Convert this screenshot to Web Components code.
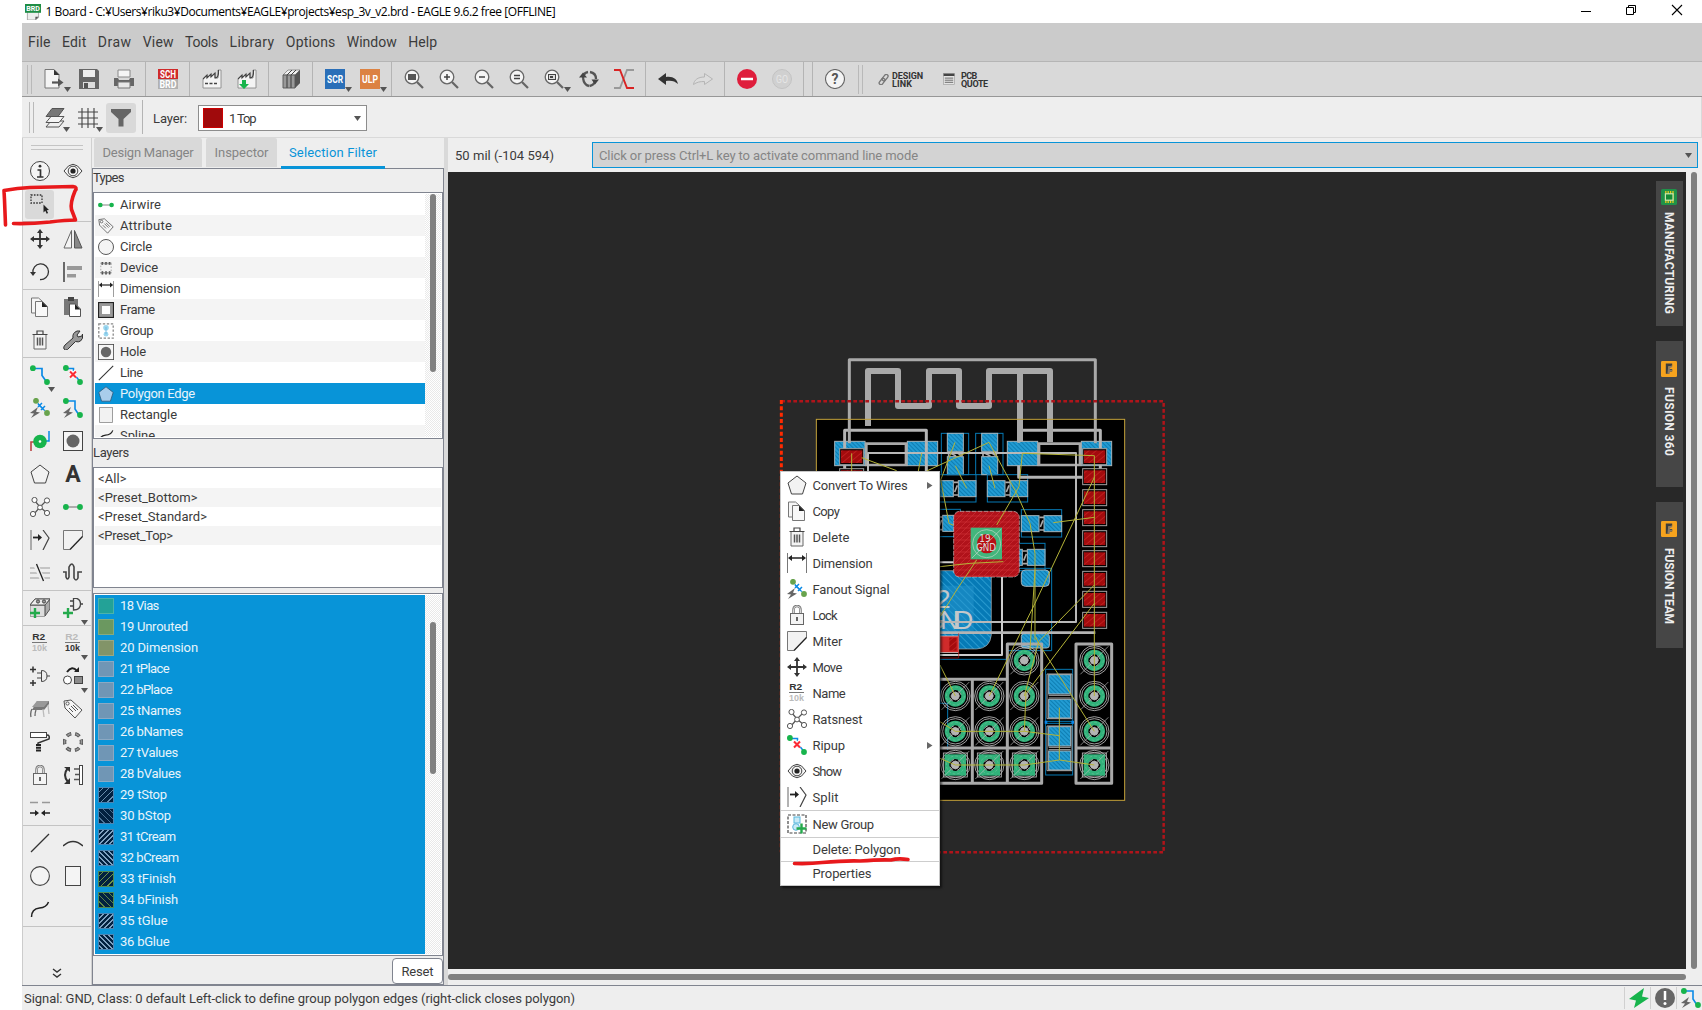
<!DOCTYPE html>
<html lang="en"><head><meta charset="utf-8"><title>Board editor</title>
<style>html,body{margin:0;height:100%;background:#fff;overflow:hidden}</style></head>
<body><eagle-app></eagle-app>
<script>
const G='#17b44c',B='#0a8ae6';
const gear='<circle cx="8" cy="8" r="6.8" fill="#f5f5f5" stroke="#666" stroke-width="1.3"/><path d="M13 13l6 6" stroke="#666" stroke-width="2.2"/>';
const node=(x,y,c=G)=>`<circle cx="${x}" cy="${y}" r="2.9" fill="${c}"/>`;
const bolt='<path d="M8 9L0 15l4 .6L1 20l9-5.6-4-.6z" fill="#666"/>';
const plus=(x,y,c='#24aa4c',s=5,w=2.4)=>`<path d="M${x-s} ${y}h${2*s}M${x} ${y-s}v${2*s}" stroke="${c}" stroke-width="${w}" fill="none"/>`;
const books='<path d="M2 6L7 1h12v13l-5 5H2z" fill="#888"/><path d="M2 6L7 1h12l-5 5z" fill="#f0f0f0" stroke="#777" stroke-width=".7"/><path d="M2 6v13h4V6zM6 6v13h4V6zM10 6v13h4V6z" fill="#999" stroke="#555" stroke-width=".9"/><path d="M6 6l5-5M10 6l5-5" stroke="#444"/><path d="M14 6l5-5v13l-5 5z" fill="#555"/>';
const fac='<path d="M1 19V10l4-4v3l4-4v3l4-4v5l3 0V1h3V19z" fill="#f4f4f4" stroke="#8a8a8a" stroke-width=".9"/><path d="M1 10l4-4v3l4-4v3l4-4v5q4 0 3.500-8" fill="none" stroke="#444" stroke-width="1.100"/>';
const tag='<path d="M1 2l7-1 11 10-7 8L2 9z" fill="#f6f6f6" stroke="#555"/><circle cx="4.500" cy="4.500" r="1.600" fill="#fff" stroke="#555"/><path d="M6 9l4 4M8 7l5 5M10 6l5 5" stroke="#555" stroke-width="1"/>';
const r2=(a,b)=>`<g font-family="Liberation Sans,sans-serif" font-weight="700" font-size="8.800"><text x="8.700" y="7.300" text-anchor="middle" textLength="13" lengthAdjust="spacingAndGlyphs" fill="${a}">R2</text><text x="9.500" y="17.600" text-anchor="middle" textLength="15" lengthAdjust="spacingAndGlyphs" fill="${b}">10k</text></g><path d="M2 9.500h15" stroke="#777"/>`;
const I={
brd:'<path d="M3 8h14v9l-4 3H3z" fill="#eee" stroke="#999"/><path d="M13 20v-4h4z" fill="#555"/><rect x="0" y="0" width="20" height="11" fill="#1f8d45"/><text x="10" y="8.800" font-size="8.500" font-weight="700" fill="#fff" text-anchor="middle" textLength="17" lengthAdjust="spacingAndGlyphs" font-family="Roboto,sans-serif">BRD</text>',
newf:'<path d="M1 .5h9l5 5V19H1z" fill="#f4f4f4" stroke="#777"/><path d="M10 .5v5.500h5.500z" fill="#333"/><path d="M8 13.500h6" stroke="#555" stroke-width="2.200"/><path d="M14 9.500l5.500 4-5.500 4z" fill="#555"/>',
save:'<path d="M0 0h18l2 2v18H0z" fill="#666"/><path d="M4 1h12v7H4z" fill="#eee"/><path d="M4 13h12v6H4z" fill="#ddd"/><rect x="5" y="14" width="4" height="5" fill="#555"/>',
print:'<path d="M4 1h12v7H4z" fill="#f4f4f4" stroke="#888"/><path d="M0 9h4l1 2h10l1-2h4v8H0z" fill="#666"/><path d="M4 13h12v6H4z" fill="#e8e8e8" stroke="#777"/>',
sch:'<rect width="20" height="10" fill="#cf2a2a"/><rect y="10" width="20" height="10" fill="#b1b1b1"/><g font-family="Roboto,sans-serif" font-weight="700" font-size="10" fill="#fff" text-anchor="middle"><text x="10" y="8.700" textLength="16" lengthAdjust="spacingAndGlyphs">SCH</text><text x="10" y="18.700" textLength="17" lengthAdjust="spacingAndGlyphs">BRD</text></g>',
fac:fac+'<path d="M3 14.500h3m1.500 0h3m1.500 0h3" stroke="#444" stroke-width="1.500"/>',
fac2:fac+`<path d="M5 11h4v4h3l-5 5-5-5h3z" fill="${G}"/>`,books,
scr:'<rect width="20" height="20" fill="#2a6fb8"/><text x="10" y="13.800" font-size="10" font-weight="700" fill="#fff" text-anchor="middle" textLength="16" lengthAdjust="spacingAndGlyphs" font-family="Roboto,sans-serif">SCR</text>',
ulp:'<rect width="20" height="20" fill="#dc8242"/><text x="10" y="13.800" font-size="10" font-weight="700" fill="#fff" text-anchor="middle" textLength="16" lengthAdjust="spacingAndGlyphs" font-family="Roboto,sans-serif">ULP</text>',
zfit:gear+'<rect x="4" y="5" width="8" height="6" fill="#555"/>',zin:gear+plus(8,8,'#444',3,1.5),zout:gear+'<path d="M5 8h6" stroke="#444" stroke-width="1.500"/>',zeq:gear+'<path d="M5 6.500h6M5 9.500h6" stroke="#444" stroke-width="1.500"/>',zsel:gear+'<rect x="4.500" y="5.500" width="7" height="5" fill="#ddd" stroke="#444"/><rect x="6" y="7" width="3" height="2" fill="#444"/>',
refresh:'<path d="M9 3Q4 4 4 9M4 9q1 7 6 8M11 3q6 1 6 7M16.500 11q-1 5-6 6" fill="none" stroke="#555" stroke-width="2.300"/><path d="M9 2Q3 4 3.500 9.500L9 16q-3-6 0-14z" fill="none"/><path d="M0 8.500h8L4 3.500zM12.500 10.500h7.500l-4 5z" fill="#444"/>',
xline:'<path d="M0 19h6l7-18h7" fill="none" stroke="#999" stroke-width="1.800"/><path d="M0 1h6l7 18h7" fill="none" stroke="#d92323" stroke-width="1.900"/>',
undo:'<path d="M0 10l8-6v4c7-1 11 2 12 7-3-3-7-4-12-3v4z" fill="#333"/>',redo:'<path d="M19.500 10l-8-5.500V8C5 8 1 11 .5 15.500 4 13 7 12.500 11.500 12.500v3z" fill="#dcdcdc" stroke="#b5b5b5"/>',
stop:'<circle cx="10" cy="10" r="10" fill="#df1e3c"/><path d="M4 10h12" stroke="#fff" stroke-width="2.500"/>',
go:'<circle cx="10" cy="10" r="9.500" fill="#d0d0d0" stroke="#c3c3c3"/><text x="10" y="14" font-size="11" fill="#e6e6e6" text-anchor="middle" textLength="12" lengthAdjust="spacingAndGlyphs" font-family="Roboto,sans-serif">GO</text>',
help:'<circle cx="10" cy="10" r="9.500" fill="#f4f4f4" stroke="#666" stroke-width="1.100"/><text x="10" y="15" font-size="14" font-weight="700" fill="#555" text-anchor="middle" font-family="Roboto,sans-serif">?</text>',
link:'<g transform="rotate(-52 10 10)" fill="none" stroke="#777" stroke-width="2.400"><rect x="-1" y="7" width="13" height="6.500" rx="3.200"/><rect x="8" y="7" width="13" height="6.500" rx="3.200"/></g>',
quote:'<rect x="1" y="1" width="18" height="18" fill="#e4e4e4" stroke="#999"/><path d="M1 3h18" stroke="#444" stroke-width="4"/><path d="M3 8.500h14M3 12h14M3 15.500h14" stroke="#555" stroke-width="1.400"/>',
layers:'<g stroke="#555" stroke-width="1"><path d="M1 19l5-6h13l-5 6z" fill="#eee"/><path d="M1 14.500L6 8.500h13l-5 6z" fill="#f4f4f4"/><path d="M1 8.500l6-8h12l-6 8z" fill="#777"/></g>',
grid:'<path d="M4 0v20M10 0v20M16 0v20M0 4h20M0 10h20M0 16h20" stroke="#444" stroke-width="1.100"/>',
filter:'<path d="M0 1h20v3l-7.500 7v7.500h-5V11L0 4z" fill="#666"/>',
info:'<circle cx="10" cy="10" r="9.500" fill="#f4f4f4" stroke="#444"/><circle cx="10" cy="5.200" r="1.400" fill="#333"/><path d="M7.500 9h3v7M7 16h6.500" fill="none" stroke="#333" stroke-width="1.700"/>',
eye:'<path d="M1 10Q10-3.500 19 10 10 23.500 1 10z" fill="#f4f4f4" stroke="#444"/><circle cx="10" cy="10" r="4.800" fill="none" stroke="#444"/><circle cx="10" cy="10" r="2.600" fill="#222"/>',
select:'<rect x="1" y="1" width="11" height="8" fill="none" stroke="#333" stroke-width="1.300" stroke-dasharray="1.600 1.300"/><path d="M13.500 10.500v8l1.800-1.700 1.400 3 1.400-.7-1.400-2.900 2.300-.2z" fill="#222"/>',
move:'<path d="M10 2v16M2 10h16" stroke="#333" stroke-width="1.800"/><path d="M10 0L7 4h6zM10 20l-3-4h6zM0 10l4-3v6zM20 10l-4-3v6z" fill="#333"/>',
mirror:'<path d="M8.500 1.500V19H1z" fill="#f4f4f4" stroke="#666"/><path d="M11.500 1.500V19H19z" fill="#888" stroke="#555"/>',
rotate:'<path d="M3 11a7.800 7.800 0 1 1 7 6.500" fill="none" stroke="#333" stroke-width="1.300"/><path d="M0 10h6l-3 4z" fill="#333"/>',
align:'<path d="M1 0v20" stroke="#222" stroke-width="1.300"/><rect x="4" y="4" width="15" height="4" fill="#999"/><rect x="4" y="12" width="9" height="3.500" fill="#999"/>',
copy:'<path d="M1.500 1h7L12 4v12H1.500z" fill="#f6f6f6" stroke="#777"/><path d="M5.500 4.500h7l5 5v10h-12z" fill="#f8f8f8" stroke="#777"/><path d="M12 4.500l5.500 5.500H12z" fill="#222"/>',
paste:'<path d="M1 2h14v16H1z" fill="#777"/><rect x="5" width="6" height="4" fill="#444"/><path d="M6.500 7h6l5 5v7.500h-11z" fill="#fff" stroke="#555"/><path d="M12 7l5.500 5.500H12z" fill="#222"/>',
trash:'<path d="M4 4.500h12V19H4z" fill="#f4f4f4" stroke="#666"/><path d="M2.500 4.500h15M7 4V1h6v3" fill="none" stroke="#444" stroke-width="1.200"/><path d="M7.500 7.500v8M10 7.500v8M12.500 7.500v8" stroke="#555" stroke-width="1.500"/>',
wrench:'<path d="M1 19q-1-2 1-4l8-7q-1-5 4-7l3 0-3 4 1 2 4-1 .5-2q1 5-2 7-2 1.500-5 .5l-8 8q-2 1.500-3.500-.5z" fill="#999" stroke="#333"/>',
route:'<path d="M3 3.500h9v7l5 7" fill="none" stroke="#0a8ae6" stroke-width="1.700"/>'+node(2.900,3.200)+node(17,17),
ripup:'<path d="M3 3.500h7.500v5l6.500 8" fill="none" stroke="#0a8ae6" stroke-width="1.500"/>'+node(2.900,3)+node(17,17)+'<path d="M7 6l6 6.500M13 6l-6 6.500" stroke="#fff" stroke-width="4"/><path d="M7 6.500l6 6M13 6.500l-6 6" stroke="#fb2b35" stroke-width="2.100"/>',
fanout:'<path d="M5 2l12 13" stroke="#0a8ae6"/><path d="M8 9l4-4M11 12l4-4M8 6l6 6" stroke="#0a8ae6" stroke-width="1.500"/>'+node(6,2.800,'#68a34d')+node(17,15,'#68a34d')+bolt,
autor:'<path d="M3 3h9v8l4 6" fill="none" stroke="#0a8ae6" stroke-width="1.600"/>'+node(2.900,3)+node(17,17)+bolt,
via:`<path d="M1 20v-9h4" fill="none" stroke="#b44" stroke-width="1.600"/><path d="M13 10h6V0" fill="none" stroke="${B}" stroke-width="1.500"/><circle cx="10" cy="10.500" r="6.800" fill="${G}"/><circle cx="10" cy="10.500" r="1.300" fill="#fff"/>`,
hole:'<rect x=".5" y=".5" width="19" height="19" fill="#f6f6f6" stroke="#444"/><circle cx="10" cy="10" r="6.500" fill="#666"/>',
pent:'<path d="M10 1l9 7-3.500 11h-11L1 8z" fill="#f2f2f2" stroke="#444"/>',pentb:'<path d="M10 1l9 7-3.500 11h-11L1 8z" fill="#a9cdeb" stroke="#345879"/>',
txt:'<text x="10" y="18" font-size="23" font-weight="700" fill="#333" text-anchor="middle" font-family="Roboto,sans-serif">A</text>',
rats:'<path d="M5 4l5 6 6-6M10 10l-6 7M10 10l7 6" fill="none" stroke="#555" stroke-width="1.200"/><g fill="#fff" stroke="#555"><circle cx="4.500" cy="3" r="2.600"/><circle cx="17" cy="3.500" r="2.600"/><circle cx="10" cy="10.500" r="2.400"/><circle cx="3" cy="17" r="2.600"/><circle cx="17" cy="16" r="2.600"/></g>',
air:'<path d="M3 10h14" stroke="#888" stroke-width="1.300"/>'+node(2.900,10)+node(17,10),
split:'<path d="M1 0v20" stroke="#666"/><path d="M3 7.500h6" stroke="#222" stroke-width="1.800"/><path d="M8 4l4 3.500L8 11z" fill="#222"/><path d="M13 0l6 8-6 12" fill="none" stroke="#444" stroke-width="1.200"/>',
miter:'<path d="M.5.500h19V7L7 19.500H.5z" fill="#f2f2f2"/><path d="M19.500 7V.5H.5v19H7" fill="none" stroke="#777"/><path d="M19.500 6.500L7 19.500" stroke="#222" stroke-width="1.300"/>',
cut:'<path d="M0 5h20M0 10h20M0 15h20" stroke="#999" stroke-width="1.200"/><path d="M5 0l9 20" stroke="#eee" stroke-width="5"/><path d="M6.500 1l7 17" stroke="#222" stroke-width="1.300"/>',
meander:'<path d="M0 9h3v5q1.500 4 3 0V4q3-6 5 0v11q2 4 4 0V9h4" fill="none" stroke="#444" stroke-width="1.600"/>',
addp:'<path d="M0 7l5-6h15v10l-5 7H0z" fill="#aaa" stroke="#555"/><path d="M.5 7H15v11H.5z" fill="#ddd"/><path d="M0 7h15v11M15 7l5-6" fill="none" stroke="#444"/><path d="M0 7l5-6h15l-5 6z" fill="#eee" stroke="#555"/><circle cx="8" cy="3.500" r="1.600" fill="#999" stroke="#444"/><circle cx="14" cy="3.500" r="1.600" fill="#999" stroke="#444"/>'+plus(5,15),
addg:'<path d="M10.500 0q7 0 7 6t-7 6zM7 3h4M7 8h4M17 6h3" fill="none" stroke="#444" stroke-width="1.300"/>'+plus(5,15),
name:r2('#333','#bbb'),value:r2('#bbb','#333'),
swapg:plus(3,3.500,'#333',3,1.500)+plus(3,17,'#333',3,1.500)+'<path d="M11.500 4.500q5.500 0 5.500 5.500t-5.500 5.500zM7 7h4M7 12h4M17 10h3" fill="none" stroke="#444" stroke-width="1"/>',
repl:'<circle cx="4.500" cy="14" r="4" fill="#fff" stroke="#444"/><rect x="11.500" y="10.500" width="8" height="7" fill="#8c8c8c" stroke="#444"/><path d="M4 6q5-7 10-1" fill="none" stroke="#222" stroke-width="2"/><path d="M11 6h5V1z" fill="#222"/>',
chip:'<path d="M7 2h12v3l-5 6H2z" fill="#777"/><path d="M7 2h12l-5 6H2z" fill="#999"/><path d="M2 10q-2 3-1 8M6 11q-1 2-1 6" fill="none" stroke="#666" stroke-width="1.300"/><path d="M13 10l1 8M18 6l1 9" stroke="#bbb" stroke-width="1.300"/>',tag,
roller:'<rect x=".5" y=".5" width="16" height="5" fill="#fff" stroke="#444"/><path d="M17 3q3 0 2 4L8 11v3" fill="none" stroke="#333" stroke-width="1.500"/><path d="M8.500 12v8" stroke="#222" stroke-width="5" stroke-dasharray="2 .7"/>',
ring:'<circle cx="10" cy="10" r="8.500" fill="none" stroke="#555" stroke-width="3.500" stroke-dasharray="5 3.900" transform="rotate(-17 10 10)"/><circle cx="10" cy="10" r="8.500" fill="none" stroke="#999" stroke-width="1.600" stroke-dasharray="3.500 5.400" stroke-dashoffset="-.7" transform="rotate(-17 10 10)"/>',
lock:'<rect x="3.500" y="8.500" width="13" height="11" fill="#f4f4f4" stroke="#666"/><path d="M6.500 8V5q0-4 3.500-4t3.500 4v3" fill="none" stroke="#777" stroke-width="2.500"/><path d="M6.500 8V5q0-4 3.500-4t3.500 4v3" fill="none" stroke="#fff" stroke-width=".7"/><path d="M10 12v4" stroke="#333" stroke-width="1.500"/>',
swap:'<path d="M5 3Q-1 10 5 17" fill="none" stroke="#333" stroke-width="2"/><path d="M1 2h6v5zM1 19h6v-6z" fill="#333"/><rect x="16.500" y=".5" width="3" height="19" fill="#fff" stroke="#444"/><path d="M11 4h5M12 9.500h4M11 14.500h5" stroke="#555" stroke-width="1.600"/>',
join:'<path d="M0 4.500h8M12 4.500h8" stroke="#999" stroke-width="1.500"/><path d="M0 15h6M14 15h6" stroke="#222" stroke-width="1.500"/><path d="M9 15l-4-3v6zM11 15l4-3v6z" fill="#222"/>',
line:'<path d="M1 19L19 1" stroke="#333" stroke-width="1.300"/>',arc:'<path d="M0 13q10-9 20 0" fill="none" stroke="#333" stroke-width="1.500"/>',
circle:'<circle cx="10" cy="10" r="9.400" fill="#f4f4f4" stroke="#444" stroke-width="1.100"/>',rect:'<rect x="2.500" y=".5" width="15" height="19" fill="#f4f4f4" stroke="#444"/>',spline:'<path d="M1.500 18q0-8 8-9 7-.5 9-6" fill="none" stroke="#222" stroke-width="1.500"/>',
dev:'<rect x="3.500" y="5" width="13" height="11" fill="#f4f4f4" stroke="#999" stroke-dasharray="2 2"/><path d="M5.500 2.500v3.500M10 2.500v3.500M14.500 2.500v3.500M5.500 14v4M10 14v4M14.500 14v4" stroke="#444" stroke-width="2"/><path d="M3 4h14M3 16h14" stroke="#777"/>',
dim:'<path d="M.5 0v20M19.500 0v20" stroke="#777"/><path d="M3 5h14" stroke="#222" stroke-width="1.500"/><path d="M1 5l4-3v6zM19 5l-4-3v6z" fill="#222"/>',
frame:'<rect x=".7" y=".7" width="18.600" height="18.600" fill="#999" stroke="#222" stroke-width="1.400"/><rect x="5" y="5" width="10" height="10" fill="#fff"/>',
group:'<rect x="1" y="1" width="18" height="18" fill="#fff" stroke="#888" stroke-width="1.600" stroke-dasharray="3 2"/><circle cx="10" cy="6" r="3.500" fill="#9bd7ef"/><circle cx="10" cy="14" r="3" fill="#9bd7ef"/><path d="M10 5v9" stroke="#67aedb"/>',
ngroup:'<rect x="1" y="1" width="18" height="18" fill="#fff" stroke="#444" stroke-width="1.200" stroke-dasharray="3 1.500"/><rect x="7" y="3" width="6" height="6" fill="#c9eaf7" stroke="#59b7dd"/><circle cx="9" cy="13" r="3.300" fill="#c9eaf7" stroke="#59b7dd"/>'+plus(14.500,14.500),
rect2:'<rect x="2" y=".7" width="16" height="18.600" fill="#f2f2f2" stroke="#888"/>',
bolt:`<path d="M15 0L0 11l7 1.500L5 20l15-10-7-1.500z" fill="${G}"/>`,warn:'<circle cx="10" cy="10" r="10" fill="#666"/><path d="M10 3v9" stroke="#fff" stroke-width="2.500"/><circle cx="10" cy="15.500" r="1.500" fill="#fff"/>',
mfg:'<rect width="20" height="20" rx="2" fill="#1f9149"/><path d="M6 2.500v15M9 2.500v15M12 2.500v15M15 2.500v15" stroke="#e8c91c" stroke-width="1.600"/><rect x="5.500" y="6" width="9.500" height="8" fill="#168a35" stroke="#cde4b0" stroke-width="1.500"/>',
fus:'<rect width="20" height="20" rx="1.500" fill="#f6a31e"/><path d="M6 3h8v3l-5 1v3l5 0v3l-4 0v3l-4 0z" fill="#3b3d3e"/><path d="M9 7l5-1.500v2l-3 1.500v2h3v1.500l-3 .5v3l-3 0z" fill="#8a7a66"/>',
chev:'<path d="M6 4l4 3 4-3M6 9l4 3 4-3" fill="none" stroke="#333" stroke-width="1.400"/>'
};
const box='*{box-sizing:border-box}';
function def(n,html){const t=document.createElement('template');
 return [n,class extends HTMLElement{connectedCallback(){if(this.shadowRoot)return;const r=this.attachShadow({mode:'open'});t.innerHTML=typeof html==='function'?html(this):html;r.append(t.content.cloneNode(true));}}]}
const T=(s,w)=>`<fit-text w="${w}">${s}</fit-text>`;
const A=(e,n,d='')=>e.getAttribute(n)??d;
const tri='<svg width="7" height="5" viewBox="0 0 7 5"><path d="M0 0h7L3.500 5z" fill="#555"/></svg>';
const types=[['air','Airwire',41],['tag','Attribute',52],['circle','Circle',32],['dev','Device',38],['dim','Dimension',60.5],['frame','Frame',35],['group','Group',33.5],['hole','Hole',26],['line','Line',23],['pentb','Polygon Edge',75],['rect2','Rectangle',57],['spline','Spline',35]];
const lay=[['18 Vias',39,'#23a297'],['19 Unrouted',68,'#6b9860'],['20 Dimension',78,'#829468'],['21 tPlace',49.5],['22 bPlace',52.5],['25 tNames',61],['26 bNames',63],['27 tValues',58],['28 bValues',61],['29 tStop',47,0,'a'],['30 bStop',51,0,'b'],['31 tCream',56,0,'c'],['32 bCream',59,0,'d'],['33 tFinish',56,0,'e'],['34 bFinish',58,0,'f'],['35 tGlue',47.5,0,'c'],['36 bGlue',49.5,0,'d']];
function swatch(c,h){ if(!h)return `background:${c||'#7096b5'};border:1px solid #ffffff30`;
 const col={a:'#6b8fae',b:'#4d7293',c:'#7fa0bf',d:'#7fa0bf',e:'#6f9448',f:'#5d8448'}[h],dir='ace'.includes(h)?'-45deg':'45deg',w='cd'.includes(h)?1.7:.8,p='cd'.includes(h)?3.5:4.3;
 return `border:1px solid ${'ef'.includes(h)?'#4f8a55':'#4b85b4'};background:repeating-linear-gradient(${dir},#022140 0 ${p-w}px,${col} ${p-w}px ${p}px)`}
const tools=[['info','eye'],['select*',''],0,['move','mirror'],['rotate','align'],0,['copy','paste'],['trash','wrench'],0,['route^','ripup'],['fanout','autor'],['via','hole'],['pent','txt'],['rats','air'],['split','miter'],['cut','meander'],0,['addp','addg^'],0,['name','value^'],['swapg','repl^'],['chip','tag'],['roller','ring'],['lock','swap'],['join',''],0,['line','arc'],['circle','rect'],['spline',''],0];
const cm=[['pent','Convert To Wires',95,1],['copy','Copy',27],['trash','Delete',37],['dim','Dimension',60],['fanout','Fanout Signal',77],['lock','Lock',24.5],['miter','Miter',30],['move','Move',29.5],['name','Name',33],['rats','Ratsnest',50],['ripup','Ripup',32.5,1],['eye','Show',29],['split','Split',26]];
function pcb(){
 const rc=(x,y,X,Y,a)=>`<rect x="${x}" y="${y}" width="${X-x}" height="${Y-y}" ${a}/>`;
 const bp=(x,y,X,Y,r=0)=>rc(x,y,X,Y,`rx="${r}" fill="url(#hb)" stroke="#a5b4bb" stroke-width="3"`);
 const ol=(x,y,X,Y)=>rc(x,y,X,Y,'fill="none" stroke="#0679b4" stroke-width="3"');
 let s='';
 s+=rc(139,238,1064,1381,'fill="#000"');
 const l=(d,w,c='#a9a9a9',x='')=>`<path d="${d}" fill="none" stroke="${c}" stroke-width="${w}" stroke-linejoin="round" ${x}/>`;
 s+='<path d="M510 692H664V885Q660 925 620 927H510z" fill="url(#hd)" stroke="#aaa" stroke-width="2"/>'+rc(500,737,611,875,'fill="#2393cc" fill-opacity=".5"');
 s+='<g font-family="Liberation Sans,sans-serif" fill="#c3c8ca"><text x="497" y="803" font-size="80">2</text><text x="610" y="868" font-size="80" text-anchor="end" textLength="146">GND</text></g>';
 [[194,304,285,377],[412,304,503,377],[712,304,803,377],[934,304,1025,377]].forEach(a=>s+=bp(...a));
 [[532,280],[635,280]].forEach(([x,y])=>{s+=ol(x-18,y,x+64,y+124)+bp(x,y,x+48,y+54)+bp(x,y+70,x+48,y+124)+l(`M${x+4} ${y+55}v14M${x+44} ${y+55}v14M${x+10} ${y+60}l16 8M${x+26} ${y+56}l15 10`,5)});
 [[497,422],[652,422],[450,526],[754,527],[704,628]].forEach(([x,y])=>{s+=ol(x,y-18,x+121,y+64)+bp(x,y,x+53,y+48)+bp(x+68,y,x+121,y+48)+l(`M${x+54} ${y+5}h14M${x+54} ${y+43}h14M${x+57} ${y+34}l8-20`,5)});
 s+=bp(754,690,838,739,12)+bp(754,881,838,924,8)+l('M700 685H845V932H710',3,'#0679b4')+l('M510 958H710V932',3,'#0679b4')+l('M510 975V1090H533V1230',3,'#0679b4');
 s+=l('M224 393V271H469V393M746 308V271H991V412H746V376',9,'#b4b4b4')+l('M285 311H412M285 375H412M289 311V375M408 311V375M803 311H934M803 375H934M807 311V375M930 311V375',8);
 s+=l('M294 393V339H918V846H510',6,'#b8b8b8')+l('M510 667H552M696 620V945H510',6,'#ccc')+l('M510 878H976',8,'#b4b4b4');
 s+=l('M238 310V59H976V310',9)+l('M294 258V93H384V198H477V93H567V198H657V93H840V306M750 93V306',18);
 const rp=(x,y)=>rc(x,y,x+72,y+48,'fill="#0a0000" stroke="#a0a0a0" stroke-width="3"')+rc(x+4,y+5,x+68,y+43,'fill="url(#hr)"');
 s+=rp(209,326)+rp(209,386);[326,386,449,509,572,632,694,754,817].forEach(y=>s+=rp(938,y));
 s+=rc(510,888,566,938,'fill="#d02b2b" stroke="#ddd" stroke-width="2"')+rc(538,893,560,932,'fill="url(#hr)"')+l('M510 954H566V880',2,'#c01818');
 s+=rc(551,514,748,711,'rx="18" fill="#b0121a" stroke="#ccc" stroke-width="2" stroke-dasharray="14 4"')+rc(551,514,748,711,'rx="18" fill="url(#hq)"')+rc(602,563,696,658,'fill="#43b67c"')+'<circle cx="650" cy="611" r="42" fill="none" stroke="#c5d7cc" stroke-width="2"/><circle cx="650" cy="611" r="29" fill="#b80f12"/>'+l('M606 654L694 567',2,'#c5d7cc');
 s+='<g font-family="DejaVu Sans,sans-serif" font-size="29" fill="#d8d8d8" text-anchor="middle"><text x="645" y="607" textLength="34" lengthAdjust="spacingAndGlyphs">19</text><text x="648" y="634" textLength="60" lengthAdjust="spacingAndGlyphs">GND</text></g>';
 s+=l('M510 1018H712M607 1018V1330M510 1330H815V912H712V1330M510 1224H815M918 912H1025V1330H918ZM918 1224H1025',9);
 s+=ol(827,988,908,1144)+ol(827,1150,908,1305);
 [[1004,1062],[1078,1134],[1160,1218],[1233,1290]].forEach(([a,b])=>s+=bp(836,a,902,b));
 s+=l('M831 1002H906V1136H831ZM831 1158H906V1292H831Z',3)+l('M836 1066h66M836 1074h66M836 1222h66M836 1229h66',3)+l('M824 1147h8M904 1147h8',9,'#0a85e8');
 const via=(x,y,q)=>`<g transform="translate(${x} ${y})" fill="none" stroke="#bdbdbd" stroke-width="2.500"><circle r="44"/><circle r="38"/>${q?'<rect x="-36" y="-36" width="72" height="72"/><rect x="-32" y="-32" width="64" height="64" fill="#30b27a" stroke="none"/><circle r="18" fill="#000" stroke="none"/>':'<circle r="25" stroke="#30b27a" stroke-width="14"/>'}<circle r="27" stroke="#7fc4a3" stroke-width="1.500" stroke-dasharray="8 6"/><path d="M-42 42L42-42" stroke-width="2"/><path d="M-13 0L-8-9 0-12 9-8 12 0 8 9 0 12-9 8z" fill="#b4b4b4"/><circle r="17" stroke="#c8c8c8" stroke-dasharray="13 13.700" stroke-dashoffset="-7"/></g>`;
 [763,973].forEach(x=>s+=via(x,961));[556,658,763,973].forEach(x=>s+=via(x,1068)+via(x,1174)+via(x,1275,1));
 s+=l('M275 353L380 392M245 340V393M455 340L445 393M470 393L657 307L740 460L780 550L795 640V900M555 307L512 420L537 550L550 556M556 377L590 445M657 377L675 445M757 340L747 440L680 555M757 340L973 347V1068M850 548L973 532M973 412L795 790L658 1068M973 735L806 905L763 1068M973 790L768 1060L763 1174M795 690L780 930M797 890L806 910L973 1174M763 1174L868 1187M868 1103V1260M763 1275L868 1260L973 1275M556 1174H763M556 1275H763M510 975L556 1068M510 1145L556 1174M510 1255L556 1275M510 680L600 670L700 665M620 660L560 750L510 830',3,'#b5b437','shape-rendering="crispEdges"');
 s+=rc(139,238,1064,1381,'fill="none" stroke="#c4a23a" stroke-width="3"');
 s+='<path d="M34 184H1181V1537H34" fill="none" stroke="#b0141a" stroke-width="7.500" stroke-dasharray="11 7"/><path d="M34 180V1537" stroke="#ff2a00" stroke-width="9" stroke-dasharray="12 7"/>';
 return s}
const defs=`<defs><pattern id="hb" width="9" height="9" patternUnits="userSpaceOnUse" patternTransform="rotate(-45)"><rect width="9" height="9" fill="#229bd2"/><rect width="2.500" height="9" fill="#0a78ad"/></pattern><pattern id="hd" width="15" height="15" patternUnits="userSpaceOnUse" patternTransform="rotate(-45)"><rect width="15" height="15" fill="#067ab6"/><rect width="3" height="15" fill="#2a9bd0"/></pattern><pattern id="hr" width="14" height="14" patternUnits="userSpaceOnUse" patternTransform="rotate(50)"><rect width="14" height="14" fill="#a30b0d"/><rect width="2" height="14" fill="#c92626"/></pattern><pattern id="hq" width="18" height="18" patternUnits="userSpaceOnUse"><path d="M0 18L18 0M0 6h18" stroke="#cf3036" stroke-width="2"/></pattern></defs>`;
const E=[
def('ui-icon',e=>{const s=A(e,'size',20);return `<style>:host{display:block;flex:none;width:${s}px;height:${s}px}svg{display:block}</style><svg width="${s}" height="${s}" viewBox="0 0 20 20">${I[A(e,'name')]||''}</svg>`}),
def('tool-btn',e=>`<style>${box}:host{display:flex;align-items:center;justify-content:center;position:relative;flex:none;width:${A(e,'w',35)}px;height:${A(e,'h',34)}px}div{display:flex;${e.hasAttribute('on')?`background:#d9d9d9;border-radius:3px;padding:${A(e,'pad','5px')}`:''}}.m{position:absolute;display:block;right:${A(e,'mr',2)}px;bottom:${A(e,'mb',5)}px}.m svg{display:block}</style><div>${A(e,'name')?`<ui-icon name="${A(e,'name')}"></ui-icon>`:''}</div>${e.hasAttribute('menu')?`<span class="m">${tri}</span>`:''}`),
def('tool-sep','<style>:host{display:flex;justify-content:center;width:9px;flex:none;align-self:stretch}i{width:1px;background:#b4b4b4}</style><i></i>'),
def('tool-grip','<style>:host{display:flex;box-sizing:border-box;gap:3px;width:5px;flex:none;align-self:stretch;padding:3px 0 2px}i{width:1px;background:#b9b9b9}</style><i></i><i></i>'),
def('title-bar',`<style>${box}:host{display:flex;height:23px;background:#fff;align-items:center;padding-left:24.500px;color:#000;font:12px "Open Sans",sans-serif}fit-text{margin-left:5px}.s{flex:1}.w{display:flex;gap:30px;padding-right:19px;align-items:center;margin-top:-3px}svg{display:block}</style><ui-icon name="brd" size="16"></ui-icon>${T('1 Board - C:¥Users¥riku3¥Documents¥EAGLE¥projects¥esp_3v_v2.brd - EAGLE 9.6.2 free [OFFLINE]',510)}<span class="s"></span><div class="w"><svg width="15" height="15"><path d="M0 8.500h10" stroke="#000"/></svg><svg width="15" height="15"><path d="M.5 4.500h7v7h-7zM2.500 4V2.500h7v7H8" fill="none" stroke="#000"/></svg><svg width="12" height="15"><path d="M1 2l10 10M11 2L1 12" stroke="#000" stroke-width="1.100"/></svg></div>`),
def('menu-bar',`<style>${box}:host{display:flex;height:39px;background:#cbcbcb;border-bottom:1px solid #b5b5b5;padding-left:6px;align-items:center;font-size:14px;color:#3b3b3b}fit-text{margin-right:11.400px}</style>${[['File',22.5],['Edit',24.5],['Draw',33.5],['View',31],['Tools',33],['Library',45],['Options',49.5],['Window',50],['Help',29]].map(a=>T(...a)).join('')}`),
def('main-toolbar',()=>{const b=(n,m)=>`<tool-btn name="${n}" ${m?'menu mr="0" mb="4"':''}></tool-btn>`,s='<tool-sep></tool-sep>';return `<style>${box}:host{display:flex;height:35px;background:#d9d9d9;border-bottom:1px solid #979797;align-items:center;padding-left:5px}tool-grip{margin-right:4px}.l{display:flex;flex-direction:column;font:700 9px/8px Roboto,sans-serif;color:#333;padding-top:1px}.g2{margin:0 15px 0 6px}ui-icon{margin-right:3px}.q{margin-left:20px;margin-right:6px}</style><tool-grip></tool-grip>${b('newf',1)+b('save')+b('print')+s+b('sch')+s+b('fac')+b('fac2')+s+b('books')+s+b('scr',1)+b('ulp',1)+s+b('zfit')+b('zin')+b('zout')+b('zeq')+b('zsel',1)+b('refresh')+b('xline')+s+b('undo')+b('redo')+s+b('stop')+b('go')+s+s+b('help')}<tool-grip class="g2"></tool-grip><ui-icon name="link" size="11"></ui-icon><div class="l">${T('DESIGN',31)+T('LINK',20)}</div><ui-icon class="q" name="quote" size="12"></ui-icon><div class="l">${T('PCB',16)+T('QUOTE',27)}</div>`}),
def('layer-bar',`<style>${box}:host{display:flex;height:41px;background:#eee;border-bottom:1px solid #d9d9d9;border-right:1px solid #d9d9d9;align-items:center;padding:2px 0 0 7px}tool-grip{margin-right:4px;padding:3px 0 4px}tool-sep{margin:1px 6px 3px 1px}.sel{display:flex;align-items:center;margin-left:11px;width:169px;height:26px;background:#fff;border:1px solid #8d8d8d;padding:0 5px 0 4px}i{width:20px;height:20px;background:#a00a0c;border:1px solid #c00;margin-right:6px}.sel span{margin-left:auto;display:flex}</style><tool-grip></tool-grip><tool-btn name="layers" menu w="33" mr="1" mb="3"></tool-btn><tool-btn name="grid" menu w="33" mr="1" mb="3"></tool-btn><tool-btn name="filter" on w="33"></tool-btn><tool-sep></tool-sep>${T('Layer:',34)}<div class="sel"><i></i>${T('1 Top',27)}<span>${tri}</span></div>`),
def('tool-palette',`<style>${box}:host{display:flex;flex-direction:column;width:70px;background:#eee;border-left:1px solid #ccc;border-right:1px solid #d0d0d0;padding:6px 0 0 0;position:relative}.g{height:5px;margin:1px 8px 4.500px;border:solid #c4c4c4;border-width:1px 0;flex:none}.r{display:flex;height:33px;flex:none}.s{height:2px;padding-top:.5px;flex:none}.s i{display:block;height:1px;background:#c4c4c4}ui-icon{margin:37px 0 0 24px}</style><div class="g"></div>${tools.map(r=>r?`<div class="r">${r.map(n=>`<tool-btn w="33" h="33" name="${n.replace(/[*^]/,'')}" ${n.includes('*')?'on pad="4.500px"':''} ${n.includes('^')?'menu mr="1" mb="0"':''}></tool-btn>`).join('')}</div>`:'<div class="s"><i></i></div>').join('')}<ui-icon name="chev"></ui-icon>`),
def('scroll-bar',e=>`<style>:host{display:flex;justify-content:center;width:16px;flex:none;background:repeating-conic-gradient(#e9e9e9 0 25%,#fff 0 50%) 0 0/2px 2px}i{width:6px;border-radius:3px;background:#808080;margin-top:${A(e,'top')}px;height:${A(e,'len')}px}</style><i></i>`),
def('list-box',`<style>${box}:host{display:flex;background:#fff;border:1px solid #80848f;padding:1px;overflow:hidden;flex:none}.c{flex:1;overflow:hidden}</style><div class="c"><slot></slot></div><slot name="bar"></slot>`),
def('list-row',e=>`<style>${box}:host{display:flex;align-items:center;height:${A(e,'h',21)}px;padding-left:3px;background:${A(e,'bg','#fff')};color:${A(e,'fg','inherit')}}ui-icon,.s{margin-right:6px}.s{width:16px;height:16px}</style>${A(e,'icon')?`<ui-icon size="16" name="${A(e,'icon')}"></ui-icon>`:''}${A(e,'sw')?`<span class="s" style="${A(e,'sw')}"></span>`:''}<slot></slot>`),
def('tab-item',e=>`<style>${box}:host{display:flex;align-items:center;justify-content:center;height:${e.hasAttribute('on')?31:29}px;width:${A(e,'w')}px;margin-right:${A(e,'gap',4)}px;background:${e.hasAttribute('on')?'none':'#d9d9d9'};color:${e.hasAttribute('on')?'#0894d8':'#858585'};${e.hasAttribute('on')?'border-bottom:3px solid #0894d8;':''}border-radius:2px 2px 0 0;position:relative}</style><slot></slot>`),
def('filter-panel',()=>`<style>${box}:host{display:flex;flex-direction:column;width:352px;background:#eee}.t{display:flex;height:30px;padding-left:2px;align-items:flex-start}.p{flex:1;border:1px solid #80848f;display:flex;flex-direction:column;padding-left:0}.h{height:23px;padding:0 0 6px 0;display:flex;align-items:center}.h2{height:28px;padding:0 0 2px 0}.b{display:flex;justify-content:flex-end;padding-top:2px}.b div{width:51px;height:26px;border:1px solid #80848f;border-radius:4px;background:#fff;display:flex;align-items:center;justify-content:center}</style>
<div class="t"><tab-item w="108">${T('Design Manager',91)}</tab-item><tab-item w="71">${T('Inspector',54)}</tab-item><tab-item on w="104">${T('Selection Filter',88)}</tab-item></div>
<div class="p"><div class="h">${T('Types',31)}</div><list-box style="height:247px">${types.map((r,i)=>`<list-row icon="${r[0]}" bg="${i==9?'#0894d8':i%2?'#f4f4f4':'#fff'}" ${i==9?'fg="#e8f4fb"':''}>${T(r[1],r[2])}</list-row>`).join('')}<scroll-bar slot="bar" top="0" len="178"></scroll-bar></list-box>
<div class="h h2">${T('Layers',36)}</div><list-box style="height:121px">${[['&lt;All&gt;',28.5],['&lt;Preset_Bottom&gt;',99.5],['&lt;Preset_Standard&gt;',109],['&lt;Preset_Top&gt;',75]].map((r,i)=>`<list-row h="19" bg="${i%2?'#f4f4f4':'#fff'}">${T(...r)}</list-row>`).join('')}</list-box>
<list-box style="height:363px;margin-top:5px"><div style="background:#0894d8;height:359px">${lay.map(r=>`<list-row bg="#0894d8" fg="#e8f4fb" sw="${swatch(r[2],r[3])}">${T(r[0],r[1])}</list-row>`).join('')}</div><scroll-bar slot="bar" top="27" len="152"></scroll-bar></list-box><div class="b"><div>${T('Reset',32)}</div></div></div>`),
def('command-bar',`<style>${box}:host{display:flex;height:34px;align-items:center;padding:0 4px 4px 7px;background:#eee}.c{margin-left:auto;width:1106px;height:26px;margin-top:4px;border:1px solid #0894d8;background:#d3d3d3;display:flex;align-items:center;padding:0 5px 0 6px;color:#858585}.c span{margin-left:auto;display:flex}.k{margin-top:4px}</style><div class="k">${T('50 mil (-104 594)',99)}</div><div class="c">${T('Click or press Ctrl+L key to activate command line mode',319)}<span>${tri}</span></div>`),
def('side-tab',e=>`<style>${box}:host{display:flex;flex-direction:column;align-items:center;width:27px;height:${A(e,'h',146)}px;margin-bottom:15px;background:#464646;padding:${A(e,'pt')}px 1px 0 0;color:#eee;font:700 12px/14px Roboto,sans-serif;gap:${A(e,'gap')}px}div{writing-mode:vertical-rl}</style><ui-icon name="${A(e,'icon')}" size="16"></ui-icon><div><slot></slot></div>`),
def('pop-menu',`<style>${box}:host{display:flex;flex-direction:column;width:160px;height:415px;background:#fff;border:1px solid #c8c8c8;box-shadow:2px 2px 2px #0008}.r{display:flex;height:26px;align-items:center;padding-left:6px;flex:none}.r ui-icon{margin-right:5.500px}.r svg{margin-left:auto;margin-right:6px}.s{height:1px;background:#cdcdcd;flex:none}.t{padding-left:31.500px;height:23px}</style>${cm.map(r=>`<div class="r"><ui-icon name="${r[0]}"></ui-icon>${T(r[1],r[2])}${r[3]?'<svg width="6" height="7"><path d="M0 0v7l5.500-3.500z" fill="#666"/></svg>':''}</div>`).join('')}<div class="s"></div><div class="r"><ui-icon name="ngroup"></ui-icon>${T('New Group',61.5)}</div><div class="s"></div><div class="r t">${T('Delete: Polygon',88)}</div><div class="s"></div><div class="r t">${T('Properties',59)}</div>`),
def('board-view',()=>`<style>${box}:host{display:flex;flex:1;background:#282828;position:relative;overflow:hidden;justify-content:flex-end}svg{position:absolute;left:0;top:0}pop-menu{position:absolute;left:332px;top:299px}.u{z-index:2}.tabs{padding:9px 3px 0 0;display:flex;flex-direction:column}</style><svg width="1238" height="797" viewBox="448 172 1238 797">${defs}<g transform="translate(770 340) scale(.33333)">${pcb()}</g></svg><pop-menu></pop-menu><svg class="u" width="1238" height="797" viewBox="448 172 1238 797"><path d="M794.500 863.500Q810 864 822 862.500Q845 860.500 860 861Q880 859.500 891 860 898 858 908 859.500" fill="none" stroke="#e8191c" stroke-width="3.600" stroke-linecap="round"/></svg><div class="tabs"><side-tab icon="mfg" pt="8" gap="7" h="145">${T('MANUFACTURING',102)}</side-tab><side-tab icon="fus" pt="20" gap="10">${T('FUSION 360',69)}</side-tab><side-tab icon="fus" pt="19" gap="11">${T('FUSION TEAM',76)}</side-tab></div>`),
def('work-area',`<style>${box}:host{display:flex;flex-direction:column;flex:1;min-width:0;background:#eee}.m{display:flex;height:797px}.v{width:16px;padding:0 5px}.v i{display:block;height:100%;width:6px;border-radius:3px;background:#808080}.h{height:16px;padding-top:5px}.h i{display:block;width:1238px;height:6px;border-radius:3px;background:#808080}</style><command-bar></command-bar><div class="m"><board-view></board-view><div class="v"><i></i></div></div><div class="h"><i></i></div>`),
def('status-bar',`<style>${box}:host{display:flex;height:25px;border-top:1px solid #80848f;background:#eee;align-items:center;padding-left:2px}.s{margin-left:auto;display:flex;padding-right:1px}.s div{border-left:1px solid #d0d0d0;padding:1px 0 0 4px;width:26px;height:22px;overflow:visible}.s{align-items:center}</style>${T('Signal: GND, Class: 0 default Left-click to define group polygon edges (right-click closes polygon)',550.5)}<div class="s"><div><ui-icon name="bolt"></ui-icon></div><div><ui-icon name="warn"></ui-icon></div><div style="width:25px"><ui-icon name="autor"></ui-icon></div></div>`),
def('eagle-app',`<style>${box}:host{display:flex;flex-direction:column;width:1702px;height:1010px;position:relative;overflow:hidden;font:13px Roboto,sans-serif;color:#3b3b3b;background:#fff}.a{margin-left:22px;display:flex;flex-direction:column}.b{display:flex;height:847px}.gap{width:4px;background:#d9d9d9}.note{position:absolute;left:0;top:180px;pointer-events:none}</style><title-bar></title-bar><div class="a"><menu-bar></menu-bar><main-toolbar></main-toolbar><layer-bar></layer-bar><div class="b"><tool-palette></tool-palette><filter-panel></filter-panel><div class="gap"></div><work-area></work-area></div><status-bar></status-bar></div><svg class="note" width="90" height="60" viewBox="0 180 90 60"><path d="M5.500 225L4.500 200 4 190.500Q18 188 30 187.500L73 186.500Q78 187 75 191 70 203 71.500 209.500L75.500 220Q66 220 50 222 30 224 13.500 223.500" fill="none" stroke="#e8191c" stroke-width="3.600" stroke-linecap="round" stroke-linejoin="round"/></svg>`)];
E.reverse().forEach(([n,c])=>customElements.define(n,c));
// Spreads a label's letters so that it fills the width given in its w attribute.
customElements.define('fit-text',class extends HTMLElement{connectedCallback(){if(this.shadowRoot)return;const r=this.attachShadow({mode:'open'});r.innerHTML='<style>:host{display:block;flex:none;white-space:nowrap}span{display:inline-block;white-space:pre}</style><span><slot></slot></span>';
 const s=r.querySelector('span'),b=s.getBoundingClientRect(),n=Math.max(b.width,b.height),w=+this.getAttribute('w');s.style.letterSpacing=((w-n)/(this.textContent.length-.5)).toFixed(3)+'px';this.style.inlineSize=w+'px'}});
</script></body></html>
